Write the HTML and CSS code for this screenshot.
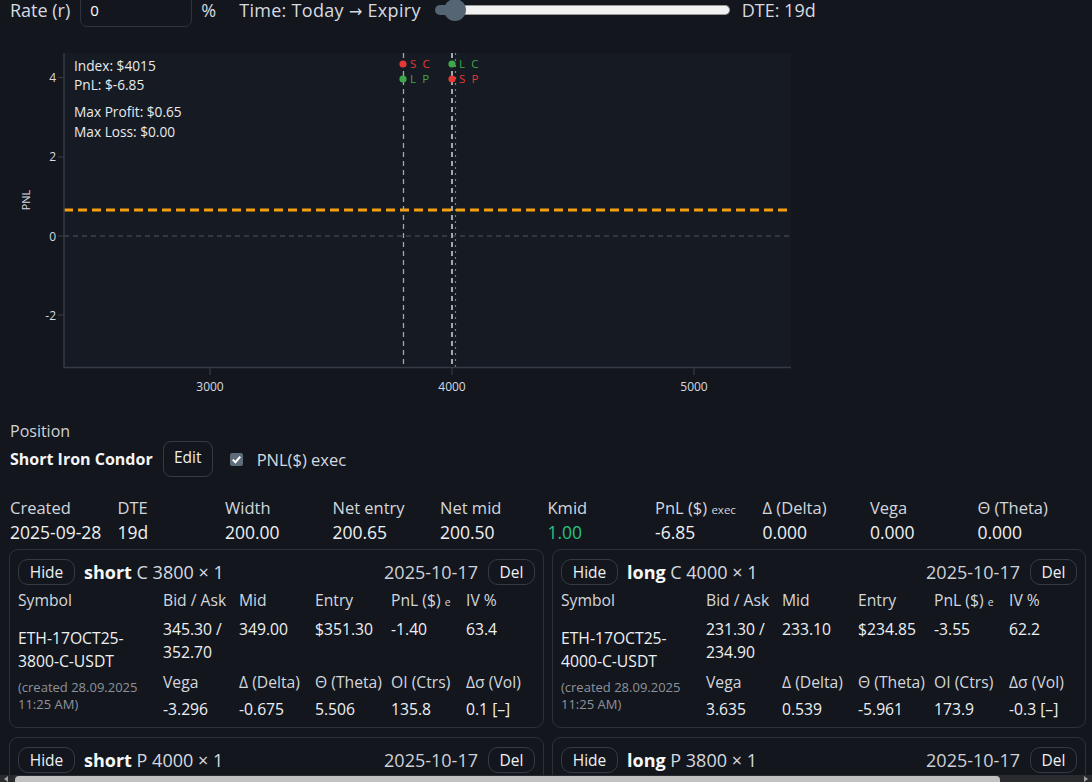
FILE: index.html
```html
<!DOCTYPE html>
<html>
<head>
<meta charset="utf-8">
<link rel="stylesheet" href="styles.css">
</head>
<body>
<div class="page">
  <div class="topbar">
    <span class="tb-label">Rate (r)</span>
    <div class="rate-input">0</div>
    <span class="pct">%</span>
    <span class="time">Time: Today <span class="arrow">→</span> Expiry</span>
    <div class="slider">
      <div class="slider-fill"></div>
      <div class="slider-track"></div>
      <div class="slider-thumb"></div>
    </div>
    <span class="dte">DTE: 19d</span>
  </div>

  <svg class="chart" width="800" height="370" viewBox="0 40 800 370" xmlns="http://www.w3.org/2000/svg">
    <rect x="64" y="53" width="727" height="314" fill="#161a22"/>
    <line x1="64" y1="236" x2="791" y2="236" stroke="#50565f" stroke-width="1.2" stroke-dasharray="5 4"/>
    <line x1="64" y1="210" x2="791" y2="210" stroke="#f5a00f" stroke-width="3" stroke-dasharray="9 5"/>
    <line x1="403.5" y1="53" x2="403.5" y2="367" stroke="#a3a8b0" stroke-width="1.3" stroke-dasharray="5 4"/>
    <line x1="452" y1="53" x2="452" y2="367" stroke="#a3a8b0" stroke-width="2" stroke-dasharray="5 4"/>
    <line x1="455.5" y1="53" x2="455.5" y2="367" stroke="#3fa84a" stroke-width="1.2" stroke-dasharray="2 4"/>
    <line x1="64" y1="53" x2="64" y2="368" stroke="#353a44" stroke-width="1.5"/>
    <line x1="63" y1="367.5" x2="791" y2="367.5" stroke="#353a44" stroke-width="1.5"/>
    <g stroke="#353a44" stroke-width="1.2">
      <line x1="58" y1="77.5" x2="64" y2="77.5"/>
      <line x1="58" y1="157" x2="64" y2="157"/>
      <line x1="58" y1="236" x2="64" y2="236"/>
      <line x1="58" y1="315" x2="64" y2="315"/>
      <line x1="210" y1="368" x2="210" y2="375"/>
      <line x1="452" y1="368" x2="452" y2="375"/>
      <line x1="694" y1="368" x2="694" y2="375"/>
    </g>
    <g class="tick" text-anchor="end">
      <text x="56" y="82">4</text>
      <text x="56" y="161">2</text>
      <text x="56" y="241">0</text>
      <text x="56" y="320">-2</text>
    </g>
    <g class="tick" text-anchor="middle">
      <text x="210" y="391">3000</text>
      <text x="452" y="391">4000</text>
      <text x="694" y="391">5000</text>
    </g>
    <text class="axis-title" x="30" y="200" transform="rotate(-90 30 200)" text-anchor="middle">PNL</text>
    <circle cx="403" cy="64" r="3.6" fill="#e53935"/>
    <text class="mk red" x="410" y="68">S C</text>
    <circle cx="403" cy="79" r="3.6" fill="#3fa84a"/>
    <text class="mk green" x="410" y="83">L P</text>
    <circle cx="452" cy="64" r="3.6" fill="#3fa84a"/>
    <text class="mk green" x="459" y="68">L C</text>
    <circle cx="452" cy="79" r="3.6" fill="#e53935"/>
    <text class="mk red" x="459" y="83">S P</text>
    <g class="info">
      <text x="74" y="71">Index: $4015</text>
      <text x="74" y="90">PnL: $-6.85</text>
      <text x="74" y="117">Max Profit: $0.65</text>
      <text x="74" y="137">Max Loss: $0.00</text>
    </g>
  </svg>

  <section class="position">
    <div class="pos-label">Position</div>
    <div class="pos-title">
      <span class="strategy">Short Iron Condor</span>
      <button class="btn edit">Edit</button>
      <label class="chk"><span class="box"><svg width="11" height="11" viewBox="0 0 11 11"><path d="M1.8 5.6 L4.4 8.2 L9.3 2.6" fill="none" stroke="#fff" stroke-width="2"/></svg></span>PNL($) exec</label>
    </div>

    <div class="stats">
      <div class="st-l">Created</div>
      <div class="st-l">DTE</div>
      <div class="st-l">Width</div>
      <div class="st-l">Net entry</div>
      <div class="st-l">Net mid</div>
      <div class="st-l">Kmid</div>
      <div class="st-l">PnL ($) <small>exec</small></div>
      <div class="st-l">Δ (Delta)</div>
      <div class="st-l">Vega</div>
      <div class="st-l">Θ (Theta)</div>
      <div class="st-v">2025-09-28</div>
      <div class="st-v">19d</div>
      <div class="st-v">200.00</div>
      <div class="st-v">200.65</div>
      <div class="st-v">200.50</div>
      <div class="st-v pos">1.00</div>
      <div class="st-v">-6.85</div>
      <div class="st-v">0.000</div>
      <div class="st-v">0.000</div>
      <div class="st-v">0.000</div>
    </div>

    <div class="cards">
      <div class="card">
        <div class="card-head">
          <button class="btn hide">Hide</button>
          <span class="leg"><b>short</b> C 3800 × 1</span>
          <span class="exp">2025-10-17</span>
          <button class="btn del">Del</button>
        </div>
        <div class="leg-grid">
          <div class="lb r1">Symbol</div>
          <div class="lb r1">Bid / Ask</div>
          <div class="lb r1">Mid</div>
          <div class="lb r1">Entry</div>
          <div class="lb r1">PnL ($) <small>e</small></div>
          <div class="lb r1">IV %</div>
          <div class="sym">ETH-17OCT25-<br>3800-C-USDT</div>
          <div class="vl r2">345.30 /<br>352.70</div>
          <div class="vl r2">349.00</div>
          <div class="vl r2">$351.30</div>
          <div class="vl r2">-1.40</div>
          <div class="vl r2">63.4</div>
          <div class="created">(created 28.09.2025<br>11:25 AM)</div>
          <div class="lb r3">Vega</div>
          <div class="lb r3">Δ (Delta)</div>
          <div class="lb r3">Θ (Theta)</div>
          <div class="lb r3">OI (Ctrs)</div>
          <div class="lb r3">Δσ (Vol)</div>
          <div class="vl r4">-3.296</div>
          <div class="vl r4">-0.675</div>
          <div class="vl r4">5.506</div>
          <div class="vl r4">135.8</div>
          <div class="vl r4">0.1 [–]</div>
        </div>
      </div>

      <div class="card">
        <div class="card-head">
          <button class="btn hide">Hide</button>
          <span class="leg"><b>long</b> C 4000 × 1</span>
          <span class="exp">2025-10-17</span>
          <button class="btn del">Del</button>
        </div>
        <div class="leg-grid">
          <div class="lb r1">Symbol</div>
          <div class="lb r1">Bid / Ask</div>
          <div class="lb r1">Mid</div>
          <div class="lb r1">Entry</div>
          <div class="lb r1">PnL ($) <small>e</small></div>
          <div class="lb r1">IV %</div>
          <div class="sym">ETH-17OCT25-<br>4000-C-USDT</div>
          <div class="vl r2">231.30 /<br>234.90</div>
          <div class="vl r2">233.10</div>
          <div class="vl r2">$234.85</div>
          <div class="vl r2">-3.55</div>
          <div class="vl r2">62.2</div>
          <div class="created">(created 28.09.2025<br>11:25 AM)</div>
          <div class="lb r3">Vega</div>
          <div class="lb r3">Δ (Delta)</div>
          <div class="lb r3">Θ (Theta)</div>
          <div class="lb r3">OI (Ctrs)</div>
          <div class="lb r3">Δσ (Vol)</div>
          <div class="vl r4">3.635</div>
          <div class="vl r4">0.539</div>
          <div class="vl r4">-5.961</div>
          <div class="vl r4">173.9</div>
          <div class="vl r4">-0.3 [–]</div>
        </div>
      </div>

      <div class="card card-partial">
        <div class="card-head">
          <button class="btn hide">Hide</button>
          <span class="leg"><b>short</b> P 4000 × 1</span>
          <span class="exp">2025-10-17</span>
          <button class="btn del">Del</button>
        </div>
      </div>

      <div class="card card-partial">
        <div class="card-head">
          <button class="btn hide">Hide</button>
          <span class="leg"><b>long</b> P 3800 × 1</span>
          <span class="exp">2025-10-17</span>
          <button class="btn del">Del</button>
        </div>
      </div>
    </div>
  </section>
</div>

<div class="hscroll">
  <span class="arrow-l"></span>
  <div class="hscroll-thumb"></div>
  <span class="arrow-r"></span>
</div>
</body>
</html>
```

FILE: styles.css
```css
* { box-sizing: border-box; }

html, body {
  margin: 0;
  background: #13161d;
  color: #e6e8eb;
  font-family: "Open Sans", "Noto Sans", sans-serif;
}

body {
  height: 782px;
  overflow: hidden;
}

.page {
  margin-top: -7px;
  padding: 0 8px 0 10px;
}

/* top bar */
.topbar {
  display: flex;
  align-items: center;
  height: 34px;
  font-size: 18px;
  color: #d6dae0;
}

.rate-input {
  width: 112px;
  height: 34px;
  margin-left: 10px;
  padding-left: 9px;
  border: 1px solid #2e343e;
  border-radius: 7px;
  display: flex;
  align-items: center;
  font-size: 15px;
  color: #fff;
}

.pct { margin-left: 9px; }

.time {
  margin-left: 23px;
  letter-spacing: 0.3px;
}

.arrow {
  font-family: "DejaVu Sans", sans-serif;
  font-size: 16px;
}

.slider {
  position: relative;
  display: flex;
  align-items: center;
  width: 295px;
  height: 12px;
  margin-left: 14px;
}

.slider-fill {
  width: 18px;
  height: 10px;
  background: #566573;
  border-radius: 5px 0 0 5px;
}

.slider-track {
  flex: 1;
  height: 10px;
  background: #f1f1f1;
  border: 1px solid #9a9a9a;
  border-left: none;
  border-radius: 0 5px 5px 0;
}

.slider-thumb {
  position: absolute;
  left: 9px;
  top: -5px;
  width: 22px;
  height: 22px;
  border-radius: 50%;
  background: #566573;
}

.dte { margin-left: 12px; }

/* chart */
.chart {
  display: block;
  margin: 13px 0 0 -10px;
}

.tick {
  font-family: "Open Sans", sans-serif;
  font-size: 12px;
  fill: #d6dae0;
}

.axis-title {
  font-family: "Open Sans", sans-serif;
  font-size: 11px;
  fill: #d6dae0;
}

.mk {
  font-family: "Open Sans", sans-serif;
  font-size: 11.5px;
  letter-spacing: 1.6px;
}
.mk.red { fill: #e53935; }
.mk.green { fill: #3fa84a; }

.info {
  font-family: "Open Sans", sans-serif;
  font-size: 13.7px;
  fill: #e8eaed;
}

/* position */
.position {
  margin-top: 10px;
}

.pos-label {
  font-size: 16px;
  line-height: 22px;
  color: #cfd3d9;
}

.pos-title {
  display: flex;
  align-items: center;
  height: 36px;
  margin-top: -1px;
}

.strategy {
  font-size: 16px;
  font-weight: 700;
  color: #f3f4f6;
}

.btn {
  font-family: inherit;
  color: #eef0f2;
  background: transparent;
  border: 1px solid #353b45;
  cursor: pointer;
}

.btn.edit {
  width: 50px;
  height: 36px;
  margin-left: 10px;
  border-radius: 8px;
  font-size: 15.5px;
  padding: 0 0 4px;
}

.chk {
  display: flex;
  align-items: center;
  margin-left: 17px;
  font-size: 16.5px;
  color: #d6dae0;
}

.box {
  width: 13px;
  height: 13px;
  margin-right: 14px;
  border-radius: 2px;
  background: #5e6c79;
  display: flex;
  align-items: center;
  justify-content: center;
}

.stats {
  display: grid;
  grid-template-columns: repeat(10, 107.5px);
  margin-top: 19px;
  line-height: 23px;
}

.st-l { color: #d3d7dd; font-size: 16.5px; }
.st-v { color: #eef0f2; font-size: 17.5px; }
.st-l small { font-size: 11.5px; }
.st-v.pos { color: #26c281; }

/* cards */
.cards {
  display: grid;
  grid-template-columns: 535px 534px;
  column-gap: 8px;
  row-gap: 9px;
  margin: 5px 0 0 -1px;
}

.card {
  border: 1px solid #2c313a;
  border-radius: 9px;
  padding: 9px 8px 6px;
}

.card-partial {
  min-height: 60px;
}

.card-head {
  display: flex;
  align-items: center;
  height: 26px;
}

.btn.hide,
.btn.del {
  height: 26px;
  border-radius: 10px;
  font-size: 15.5px;
  padding: 0 0 1px;
}

.btn.hide { width: 57px; }
.btn.del { width: 47px; margin-left: 10px; }

.leg {
  margin-left: 9px;
  font-size: 18px;
  color: #d6dae0;
}

.leg b {
  color: #f5f6f7;
}

.exp {
  margin-left: auto;
  font-size: 18px;
  color: #cdd1d7;
}

.leg-grid {
  display: grid;
  grid-template-columns: 145px 76px 76px 76px 75px 1fr;
  margin-top: 4px;
  font-size: 15.7px;
}

.lb {
  line-height: 22px;
  color: #d3d7dd;
  white-space: nowrap;
}

.lb small { font-size: 10.5px; }

.vl {
  line-height: 23px;
  color: #eef0f2;
  white-space: nowrap;
}

.r2 { padding-top: 5px; }
.r3 { padding-top: 7px; }
.r4 { padding-top: 5px; }

.sym {
  padding-top: 14px;
  margin-bottom: -9px;
  line-height: 23px;
  color: #eef0f2;
  white-space: nowrap;
}

.created {
  grid-row: span 2;
  padding-top: 15px;
  font-size: 13px;
  line-height: 17px;
  color: #8d939c;
  white-space: nowrap;
}

/* fake window scrollbar */
.hscroll {
  position: fixed;
  left: 0;
  right: 0;
  bottom: 0;
  height: 7px;
  background: #2a2b2e;
}

.hscroll-thumb {
  position: absolute;
  left: 15px;
  width: 985px;
  top: 1px;
  bottom: 0;
  background: #c2c2c2;
  border-radius: 4px 4px 0 0;
}

.arrow-l,
.arrow-r {
  position: absolute;
  top: 1px;
  width: 0;
  height: 0;
  border-top: 3px solid transparent;
  border-bottom: 3px solid transparent;
}

.arrow-l { left: 4px; border-right: 4px solid #a0a0a0; }
.arrow-r { right: 4px; border-left: 4px solid #a0a0a0; }
```
